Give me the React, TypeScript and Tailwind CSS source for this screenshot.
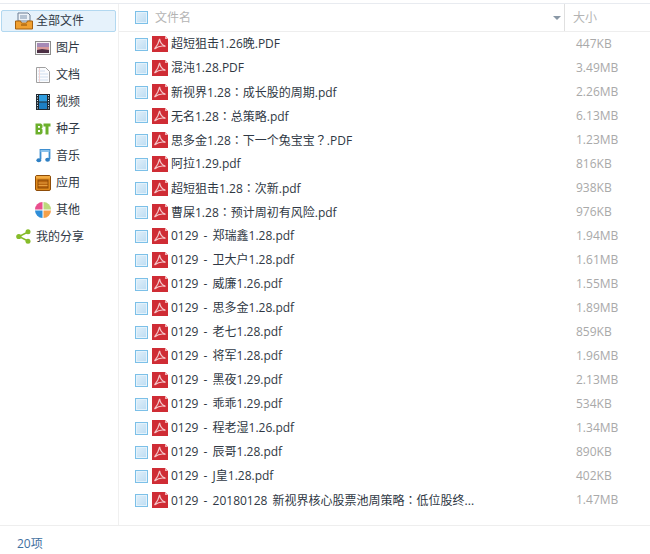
import type { ReactNode } from "react";

const rows: [string, string][] = [
  ["超短狙击1.26晚.PDF", "447KB"],
  ["混沌1.28.PDF", "3.49MB"],
  ["新视界1.28：成长股的周期.pdf", "2.26MB"],
  ["无名1.28：总策略.pdf", "6.13MB"],
  ["思多金1.28：下一个兔宝宝？.PDF", "1.23MB"],
  ["阿拉1.29.pdf", "816KB"],
  ["超短狙击1.28：次新.pdf", "938KB"],
  ["曹屎1.28：预计周初有风险.pdf", "976KB"],
  ["0129 - 郑瑞鑫1.28.pdf", "1.94MB"],
  ["0129 - 卫大户1.28.pdf", "1.61MB"],
  ["0129 - 威廉1.26.pdf", "1.55MB"],
  ["0129 - 思多金1.28.pdf", "1.89MB"],
  ["0129 - 老七1.28.pdf", "859KB"],
  ["0129 - 将军1.28.pdf", "1.96MB"],
  ["0129 - 黑夜1.29.pdf", "2.13MB"],
  ["0129 - 乖乖1.29.pdf", "534KB"],
  ["0129 - 程老湿1.26.pdf", "1.34MB"],
  ["0129 - 辰哥1.28.pdf", "890KB"],
  ["0129 - J皇1.28.pdf", "402KB"],
  ["0129 - 20180128 新视界核心股票池周策略：低位股终...", "1.47MB"],
];

function Name({ text }: { text: string }) {
  const parts = text.split(/([：？])/);
  return (
    <span className="ml-[3px] whitespace-nowrap [word-spacing:2px]">
      {parts.map((p, i) =>
        p === "：" || p === "？" ? (
          <span key={i} className="font-['Noto_Sans_CJK_TC',sans-serif]">{p}</span>
        ) : (
          <span key={i}>{p}</span>
        )
      )}
    </span>
  );
}

function Check() {
  return <span className="block w-[13px] h-[13px] shrink-0 border border-[#7cc0e8] shadow-[inset_0_0_0_1px_#e4f2fb] bg-gradient-to-br from-[#e2f0fa] to-[#bcdcf2]" />;
}

function Pdf() {
  return (
    <svg width="16" height="16" viewBox="0 0 16 16" className="block shrink-0">
      <path d="M0 0H13L16 3V16H0Z" fill="#cf2c35" />
      <path d="M13 0L16 3H13Z" fill="#f3b4b8" />
      <path d="M7.6 2.8C7 6 5.5 9.5 2.5 13M7.6 2.8C8 6 9.5 9 13.5 10.4C10.5 9.6 6.5 10 2.5 13" stroke="#f3c6c9" strokeWidth="1.2" fill="none" />
    </svg>
  );
}

function IconAll() {
  return (
    <svg width="18" height="18" viewBox="0 0 18 18">
      <path d="M3 1H13L15 3V9H3Z" fill="#eef3f8" stroke="#6d7f94" />
      <path d="M5 4H12M5 6H12" stroke="#7d93ad" />
      <path d="M0.5 9H5.5L6.5 11H11.5L12.5 9H17.5V17H0.5Z" fill="#f0a030" stroke="#a5600f" />
      <path d="M6 13H12" stroke="#8a4e08" />
    </svg>
  );
}
function IconPic() {
  return (
    <svg width="16" height="14" viewBox="0 0 16 14">
      <rect x="0.5" y="0.5" width="15" height="13" fill="#f4f4f4" stroke="#8d8d8d" />
      <rect x="2" y="2" width="12" height="5" fill="#a58ab6" />
      <rect x="2" y="6" width="12" height="3" fill="#d99a9a" />
      <path d="M2 9L7 8L14 9V12H2Z" fill="#4d3045" />
    </svg>
  );
}
function IconDoc() {
  return (
    <svg width="14" height="16" viewBox="0 0 14 16">
      <path d="M0.5 0.5H9.5L13.5 4.5V15.5H0.5Z" fill="#fbfcfe" stroke="#a0a0a0" />
      <path d="M2 4H9M2 7H12M2 10H12M2 13H12" stroke="#cfdff0" />
      <path d="M3.5 1V15" stroke="#f2d5d5" />
    </svg>
  );
}
function IconVideo() {
  return (
    <svg width="14" height="16" viewBox="0 0 14 16">
      <rect width="14" height="16" fill="#1f2a33" />
      <rect x="3" y="1" width="8" height="6.5" fill="#2f9de0" />
      <rect x="3" y="8.5" width="8" height="6.5" fill="#1d7fc4" />
      <path d="M1 1.5H2M1 4H2M1 6.5H2M1 9H2M1 11.5H2M1 14H2M12 1.5H13M12 4H13M12 6.5H13M12 9H13M12 11.5H13M12 14H13" stroke="#e6eef5" />
    </svg>
  );
}
function IconBT() {
  return (
    <svg width="16" height="12" viewBox="0 0 16 12">
      <path d="M0.5 0.5H6L7.5 2V4.5L6.5 5.5L7.5 6.5V10L6 11.5H0.5ZM3 3V4.7H5V3ZM3 7V9H5V7Z" fill="#6cb02c" fillRule="evenodd" />
      <path d="M8.5 0.5H15.5V3.5H13.5V11.5H10.5V3.5H8.5Z" fill="#6cb02c" />
    </svg>
  );
}
function IconMusic() {
  return (
    <svg width="15" height="15" viewBox="0 0 15 15">
      <path d="M4.5 11.5V2H13.5V11" fill="none" stroke="#3f8fd0" strokeWidth="1.8" />
      <path d="M4.5 2H13.5V4H4.5Z" fill="#8ac2ec" />
      <ellipse cx="2.8" cy="12.3" rx="2.4" ry="2" fill="#2f80c4" />
      <ellipse cx="11.6" cy="11.8" rx="2.4" ry="2" fill="#2f80c4" />
    </svg>
  );
}
function IconApp() {
  return (
    <svg width="16" height="16" viewBox="0 0 16 16">
      <rect x="0.5" y="0.5" width="15" height="15" rx="1.5" fill="#e08a1c" stroke="#8e4c08" />
      <rect x="1" y="1" width="14" height="2.5" fill="#f2ab42" />
      <rect x="3" y="5" width="10" height="8" fill="#b9650f" stroke="#8e4c08" />
      <path d="M3.5 8H12.5M3.5 10.5H12.5" stroke="#e8a040" />
    </svg>
  );
}
function IconOther() {
  return (
    <svg width="16" height="16" viewBox="0 0 16 16">
      <path d="M7.5 7.5V0A7.5 7.5 0 0 0 0 7.5Z" fill="#e94f8e" />
      <path d="M8.5 7.5V0A7.5 7.5 0 0 1 16 7.5Z" fill="#bcd97d" />
      <path d="M7.5 8.5V16A7.5 7.5 0 0 1 0 8.5Z" fill="#2f8ed8" />
      <path d="M8.5 8.5V16A7.5 7.5 0 0 0 16 8.5Z" fill="#f5a04a" />
    </svg>
  );
}
function IconShare() {
  return (
    <svg width="15" height="15" viewBox="0 0 15 15">
      <path d="M12 3L3 7.5L12 12" stroke="#86bc2a" strokeWidth="1.5" fill="none" />
      <circle cx="12" cy="2.8" r="2.5" fill="#86bc2a" />
      <circle cx="2.8" cy="7.5" r="2.6" fill="#86bc2a" />
      <circle cx="12" cy="12.2" r="2.5" fill="#86bc2a" />
    </svg>
  );
}

const cats: [ReactNode, string][] = [
  [<IconPic />, "图片"],
  [<IconDoc />, "文档"],
  [<IconVideo />, "视频"],
  [<IconBT />, "种子"],
  [<IconMusic />, "音乐"],
  [<IconApp />, "应用"],
  [<IconOther />, "其他"],
];

export default function App() {
  return (
    <div className="w-[650px] h-[554px] bg-white overflow-hidden flex flex-col text-[12px] text-[#2f3844] font-['Open_Sans','Noto_Sans_CJK_SC',sans-serif]">
      <div className="h-[4px] shrink-0 border-b border-[#e8ebf0]" />
      <div className="h-[522px] shrink-0 flex border-b border-[#eeeeee]">
        <aside className="w-[119px] shrink-0 border-r border-[#f0f0f0] pt-[6px]">
          <div className="ml-[1px] w-[115px] h-[22px] flex items-center pl-[13px] gap-[3px] border border-[#b2d8f0] rounded-[2px] bg-[#e6f2fb]">
            <IconAll />
            <span>全部文件</span>
          </div>
          <div className="mt-[2px]">
            {cats.map(([icon, label]) => (
              <div key={label} className="h-[27px] flex items-center">
                <span className="w-[32px] ml-[27px] mr-[-3px] flex justify-center">{icon}</span>
                <span>{label}</span>
              </div>
            ))}
            <div className="h-[27px] flex items-center pl-[16px] gap-[5px]">
              <IconShare />
              <span>我的分享</span>
            </div>
          </div>
        </aside>
        <main className="flex-1 min-w-0">
          <div className="h-[28px] flex border-b border-[#eeeeee] text-[#b4b4b4]">
            <div className="w-[445px] flex items-center pl-[16px] gap-[7px] relative">
              <Check />
              <span>文件名</span>
              <span className="absolute right-[3px] top-[12px] w-0 h-0 border-x-[4px] border-x-transparent border-t-[4px] border-t-[#8a98a6]" />
            </div>
            <div className="flex-1 flex items-center pl-[8px] border-l border-[#e0e0e0]">大小</div>
          </div>
          {rows.map(([name, size]) => (
            <div key={name} className="h-[24px] flex items-center">
              <div className="w-[457px] flex items-center pl-[16px]">
                <Check />
                <span className="ml-[4px]"><Pdf /></span>
                <Name text={name} />
              </div>
              <span className="text-[#a9a9a9]">{size}</span>
            </div>
          ))}
        </main>
      </div>
      <div className="flex-1 flex items-center pl-[17px] pt-[7px] text-[#3f6f9f]">20项</div>
    </div>
  );
}
